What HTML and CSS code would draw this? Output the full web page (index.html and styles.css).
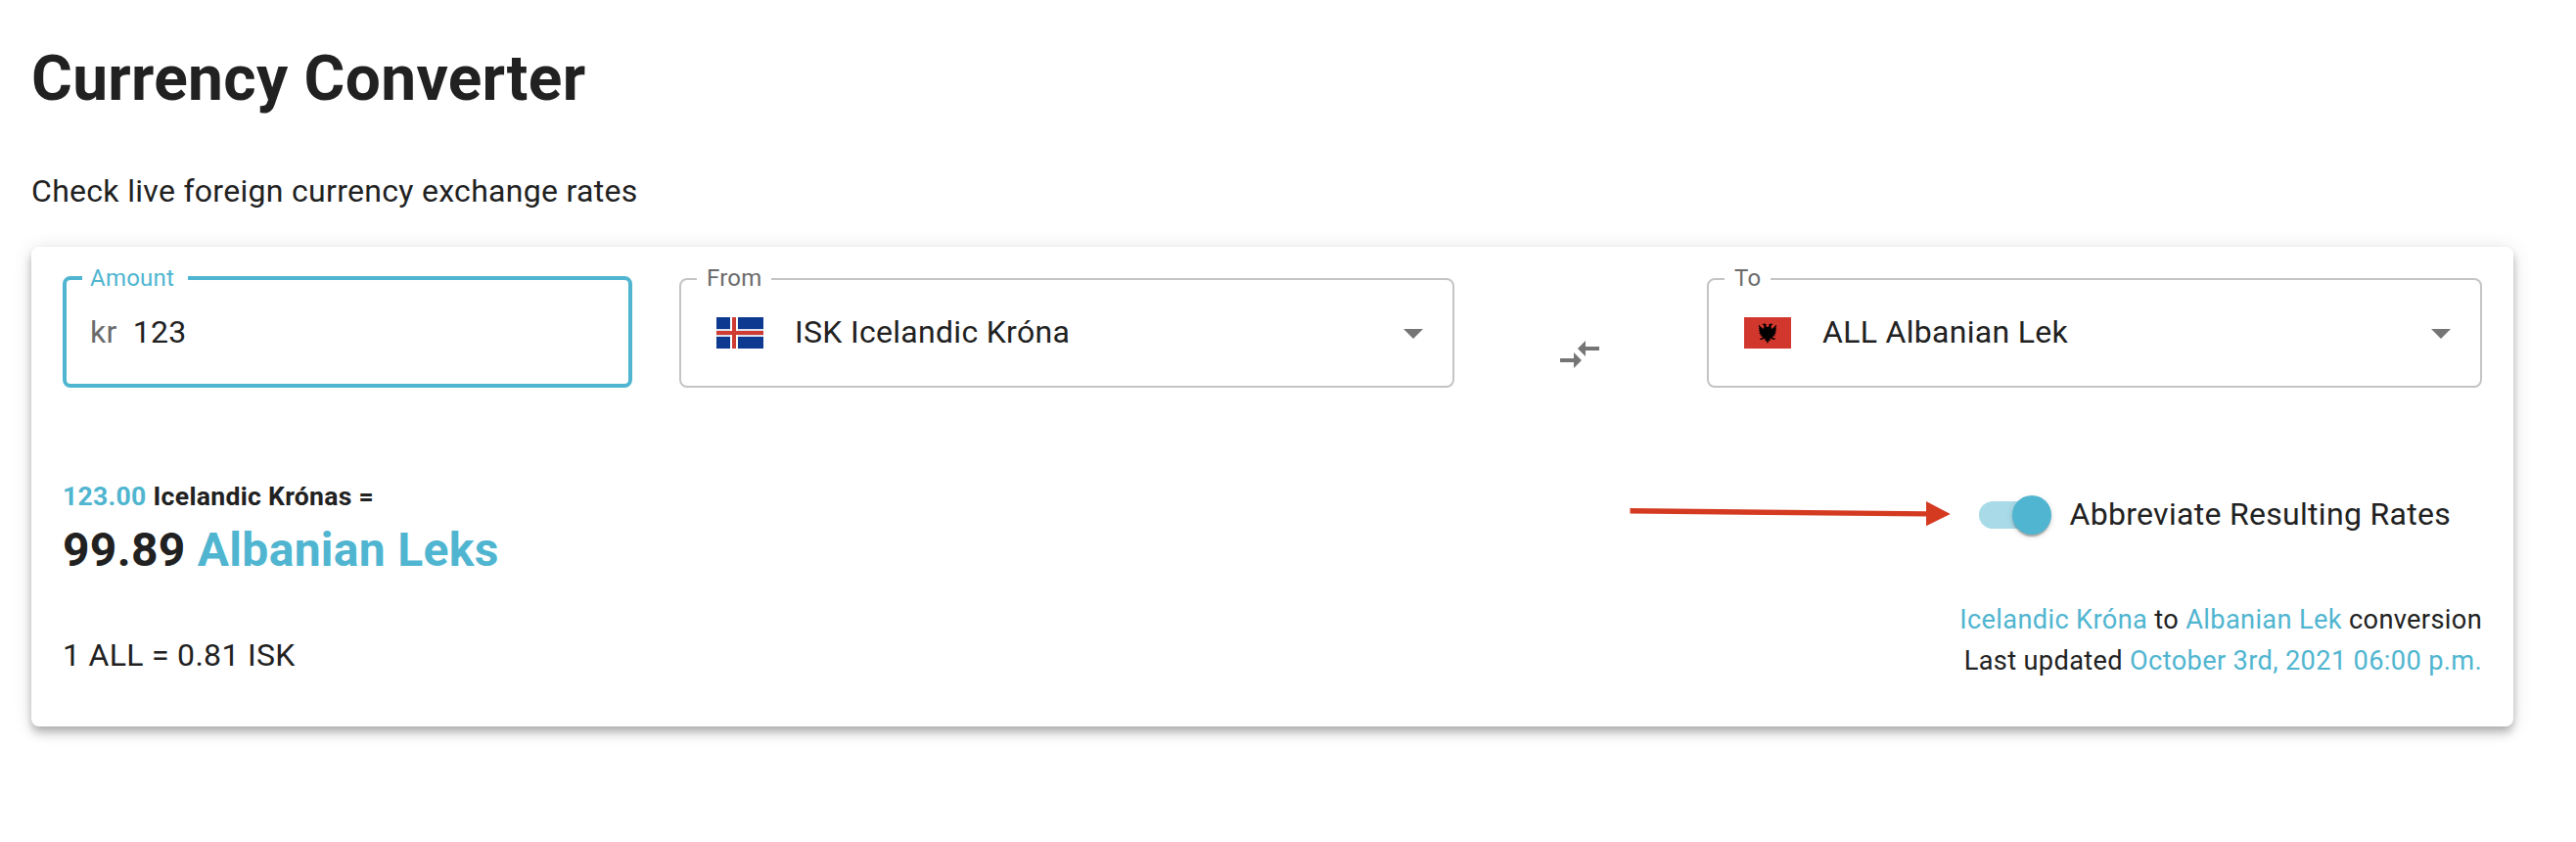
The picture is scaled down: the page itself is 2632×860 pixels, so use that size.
FILE: index.html
```html
<!DOCTYPE html>
<html lang="en">
<head>
<meta charset="utf-8">
<title>Currency Converter</title>
<link rel="stylesheet" href="styles.css">
</head>
<body>
<main class="page">
  <h1 class="title">Currency Converter</h1>
  <p class="subtitle">Check live foreign currency exchange rates</p>
  <section class="card">
    <div class="fields">
      <div class="field field-amount">
        <span class="field-label">Amount</span>
        <span class="prefix">kr</span>
        <span class="value">123</span>
      </div>
      <div class="field field-select">
        <span class="field-label">From</span>
        <svg class="flag" viewBox="0 0 48 32">
          <rect width="48" height="32" fill="#0d3990"/>
          <path d="M0 16H48" stroke="#fff" stroke-width="8" opacity=".85"/>
          <path d="M18 0V32" stroke="#fff" stroke-width="8"/>
          <path d="M18 0V32M0 16H48" stroke="#cf3c33" stroke-width="4"/>
        </svg>
        <span class="value">ISK Icelandic Króna</span>
        <svg class="icon" viewBox="0 0 24 24"><path d="M7 10l5 5 5-5z"/></svg>
      </div>
      <div class="swap">
        <svg class="icon" viewBox="0 0 24 24"><path d="M9.01 14H2v2h7.01v3L13 15l-3.99-4v3zm5.98-1v-3H22V8h-7.01V5L11 9l3.99 4z"/></svg>
      </div>
      <div class="field field-select">
        <span class="field-label">To</span>
        <svg class="flag" viewBox="0 0 48 32">
          <rect width="48" height="32" fill="#d2372e"/>
          <g id="eagle-half">
            <path d="M24 10L22.500 9.500L22.800 7.500L20.500 6.300L18.300 7.500L20 8L20.500 10L19.500 12L16.800 9.500L15 7.500L15 10L16 11L14.800 11.300L16 13L14.800 13.500L16.400 15L15 16L17 17L16 18.500L18 18.500L17.500 20L19.500 19.500L18.200 21.500L16 21.500L16.500 23L19 22.700L20.500 21.500L21.500 22L21 24.500L22.500 23.500L24 27Z"/>
          </g>
          <use href="#eagle-half" transform="matrix(-1 0 0 1 48 0)"/>
        </svg>
        <span class="value">ALL Albanian Lek</span>
        <svg class="icon" viewBox="0 0 24 24"><path d="M7 10l5 5 5-5z"/></svg>
      </div>
    </div>
    <div class="results">
      <div class="result">
        <p class="result-from"><span class="accent">123.00</span> Icelandic Krónas =</p>
        <p class="result-to">99.89 <span class="accent">Albanian Leks</span></p>
        <p class="rate">1 ALL = 0.81 ISK</p>
      </div>
      <div class="details">
        <div class="toggle">
          <svg class="pointer" viewBox="0 0 330 28">
            <path d="M0.500 7.100L303 10.200V0L327.800 13L303 25.300V15.400L0.500 12.600Z"/>
          </svg>
          <span class="switch"><span class="thumb"></span></span>
          <span class="toggle-label">Abbreviate Resulting Rates</span>
        </div>
        <p class="note"><span class="accent">Icelandic Króna</span> to <span class="accent">Albanian Lek</span> conversion</p>
        <p class="note">Last updated <span class="accent">October 3rd, 2021 06:00 p.m.</span></p>
      </div>
    </div>
  </section>
</main>
</body>
</html>
```
FILE: styles.css
```css
* {
  box-sizing: border-box;
}

body {
  min-height: 860px;
  margin: 0;
  background: #fff;
  color: #212121;
  font-family: Roboto, "Liberation Sans", sans-serif;
  font-size: 32px;
  line-height: 48px;
  letter-spacing: 0.3px;
}

h1,
p {
  margin: 0;
}

.page {
  padding: 41px 64px 0 32px;
}

.title {
  font-size: 64px;
  font-weight: 700;
  line-height: 80px;
}

.subtitle {
  margin-top: 50px;
}

.card {
  height: 490px;
  margin-top: 33px;
  padding: 30px 32px 0;
  border-radius: 8px;
  background: #fff;
  box-shadow:
    0 4px 8px -2px rgba(0, 0, 0, 0.2),
    0 8px 10px 0 rgba(0, 0, 0, 0.14),
    0 2px 20px 0 rgba(0, 0, 0, 0.12);
}

.fields {
  display: flex;
  align-items: flex-end;
}

.field {
  position: relative;
  display: flex;
  align-items: center;
  border-radius: 8px;
}

.field-amount {
  width: 582px;
  height: 114px;
  margin-right: 48px;
  padding: 0 24px;
  border: 4px solid #50b5d0;
}

.field-select {
  width: 792px;
  height: 112px;
  padding: 0 16px 0 36px;
  border: 2px solid #c4c4c4;
}

.field-select .value {
  padding-bottom: 2px;
}

.field-label {
  position: absolute;
  top: -18px;
  left: 16px;
  padding: 0 10px;
  background: #fff;
  color: #6b6b6b;
  font-size: 24px;
  line-height: 32px;
  letter-spacing: 0.22px;
}

.field-amount .field-label {
  padding: 0 14px 0 8px;
  color: #50b5d0;
}

.prefix {
  margin-right: 16px;
  color: #6b6b6b;
}

.flag {
  width: 48px;
  height: 32px;
  margin-right: 32px;
}

.field .icon {
  margin-left: auto;
}

.icon {
  width: 48px;
  height: 48px;
  fill: #757575;
}

.swap {
  display: flex;
  justify-content: center;
  width: 258px;
  padding: 0 2px 10px 0;
}

.results {
  display: flex;
  justify-content: space-between;
  padding-top: 90px;
}

.accent {
  color: #50b5d0;
}

.result-from {
  padding-top: 1px;
  font-size: 26.56px;
  font-weight: 700;
  line-height: 40px;
}

.result-to {
  margin-top: 6px;
  font-size: 48px;
  font-weight: 700;
  line-height: 58px;
}

.rate {
  margin-top: 54px;
}

.details {
  padding-top: 15px;
  font-size: 27.2px;
  line-height: 42px;
  letter-spacing: 0.35px;
  text-align: right;
}

.toggle {
  position: relative;
  display: flex;
  align-items: center;
  justify-content: flex-end;
  margin-bottom: 63px;
  padding-right: 32px;
  font-size: 32px;
  line-height: 48px;
  letter-spacing: 0.3px;
}

.pointer {
  position: absolute;
  top: 11px;
  right: 541px;
  width: 330px;
  height: 28px;
  fill: #d43a20;
}

.switch {
  display: flex;
  align-items: center;
  justify-content: flex-end;
  width: 68px;
  height: 28px;
  margin: 2px 24.5px 0 0;
  border-radius: 14px;
  background: #a8dae7;
}

.thumb {
  flex: none;
  width: 40px;
  height: 40px;
  margin-right: -6px;
  border-radius: 50%;
  background: #50b5d0;
  box-shadow:
    0 4px 2px -2px rgba(0, 0, 0, 0.2),
    0 2px 2px 0 rgba(0, 0, 0, 0.14),
    0 2px 6px 0 rgba(0, 0, 0, 0.12);
}
```
